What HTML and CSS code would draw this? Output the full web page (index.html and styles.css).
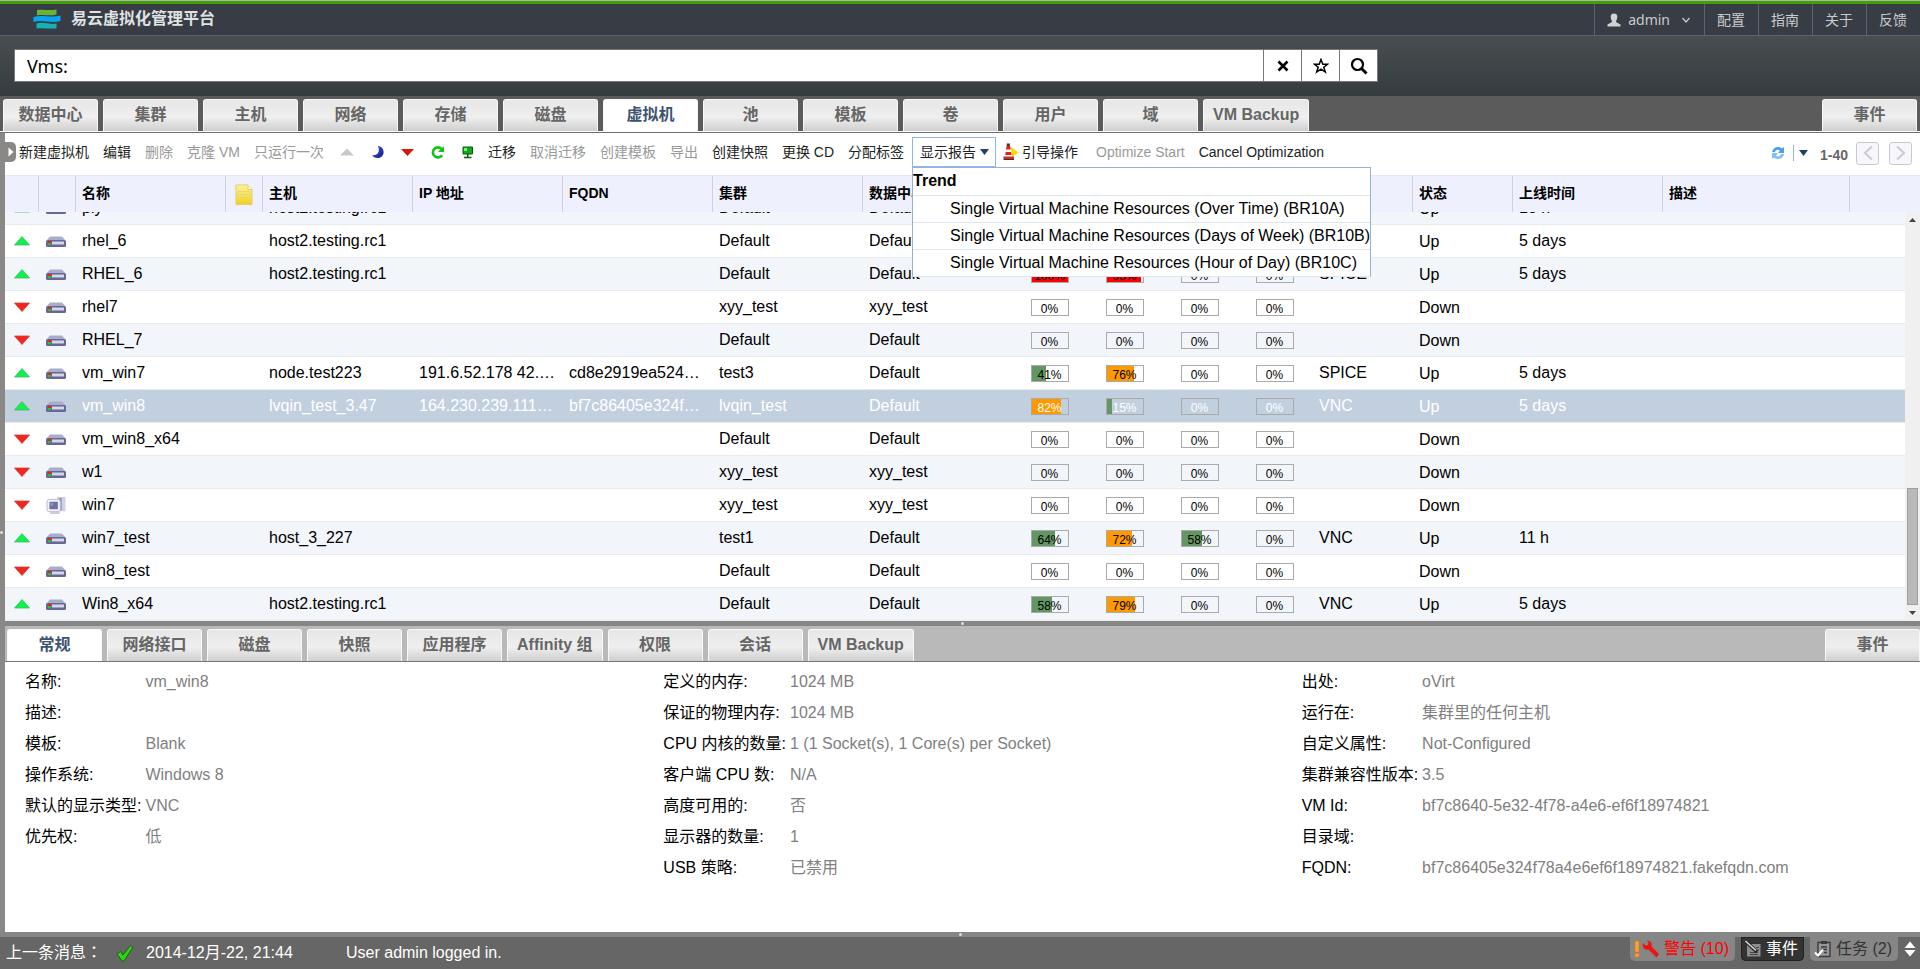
FILE: index.html
```html
<!DOCTYPE html>
<html lang="zh-CN">
<head>
<meta charset="utf-8">
<title>易云虚拟化管理平台</title>
<link rel="stylesheet" href="styles.css">
</head>
<body>
<svg class="defs" aria-hidden="true">
  <defs>
    <linearGradient id="g-note" x1="0" y1="0" x2="0" y2="1"><stop offset="0" stop-color="#fbf3a0"/><stop offset="1" stop-color="#f0d024"/></linearGradient>
    <linearGradient id="g-moon" x1="0" y1="0" x2="1" y2="1"><stop offset="0" stop-color="#4a63c4"/><stop offset="1" stop-color="#0a1896"/></linearGradient>
  </defs>
  <symbol id="up" viewBox="0 0 16 10"><path d="M8 0.5 15.5 9H0.5Z" fill="#0cf24e" stroke="#46b866" stroke-width="0.8"/></symbol>
  <symbol id="down" viewBox="0 0 16 10"><path d="M0.5 1H15.5L8 9.500Z" fill="#f8231f" stroke="#c4423e" stroke-width="0.8"/></symbol>
  <symbol id="server" viewBox="0 0 20 11">
    <path d="M4 0.500H16L19.500 4.500H0.500Z" fill="#a9adc9"/>
    <rect x="0" y="4" width="20" height="7" rx="1.500" fill="#666794"/>
    <rect x="6" y="5.500" width="12" height="3" fill="#d4d6ea"/>
    <rect x="2" y="5" width="3" height="2" fill="#e5231b"/><rect x="2" y="7" width="3" height="2" fill="#23c430"/>
  </symbol>
  <symbol id="desktop" viewBox="0 0 20 18">
    <path d="M11 0H20V15H14Z" fill="#ced0e6"/><path d="M13 1H16V14H13Z" fill="#9193b8"/>
    <rect x="0.500" y="2.500" width="14" height="13" rx="2.500" fill="#f4f4fa" stroke="#b6b8d2"/>
    <rect x="3" y="5" width="9" height="8" fill="#7072a6"/><rect x="4" y="6" width="3" height="3" fill="#9294bf"/>
    <path d="M4 17H14" stroke="#b6b8d2" stroke-width="1.500"/>
  </symbol>
</svg>

<header class="top">
  <div class="brand">
    <svg class="logo" viewBox="0 0 28 20" aria-hidden="true">
      <path d="M4 1C10 0 15 2 23.500 0.500V5.500C16 7.500 10 5 4 6.500Z" fill="#67b436"/>
      <path d="M0.500 8C9 5 17 9.500 27.500 6.500V12C18 15 9 10 0.500 13Z" fill="#0aa5ee"/>
      <path d="M3.500 14.500C10 12.500 16 16 23.500 14.500V19.500C16 20 10 18.500 3.500 19.500Z" fill="#12b3b0"/>
    </svg>
    <h1>易云虚拟化管理平台</h1>
  </div>
  <nav class="top-nav">
    <button class="user" type="button">
      <svg width="14" height="14" viewBox="0 0 14 14" aria-hidden="true"><path d="M7 0.500C9.500 0.500 10.500 2 10.300 4.500 10.100 6.500 9 7.500 9 9L13.500 11.500V13.500H0.500V11.500L5 9C5 7.500 3.900 6.500 3.700 4.500 3.500 2 4.500 0.500 7 0.500Z" fill="#d0d2d4"/></svg>
      <span>admin</span>
      <svg width="10" height="10" viewBox="0 0 10 10" aria-hidden="true"><path d="M1.500 3 5 7 8.500 3" fill="none" stroke="#c9cbcd" stroke-width="1.200"/></svg>
    </button>
    <a href="#">配置</a><a href="#">指南</a><a href="#">关于</a><a href="#">反馈</a>
  </nav>
</header>

<form class="search">
  <div class="search-box">
    <input type="text" aria-label="搜索" value="Vms:">
    <button type="button" aria-label="清除"><svg width="12" height="12" viewBox="0 0 12 12"><path d="M1.500 1.500 10.500 10.500M10.500 1.500 1.500 10.500" stroke="#000" stroke-width="2.600"/></svg></button>
    <button type="button" aria-label="书签"><svg width="16" height="16" viewBox="0 0 16 16"><path d="M8 1.500 9.800 6.200H14.600L10.800 9.200 12.300 14 8 11.100 3.700 14 5.200 9.200 1.400 6.200H6.200Z" fill="none" stroke="#000" stroke-width="1.500"/></svg></button>
    <button type="button" aria-label="搜索"><svg width="18" height="18" viewBox="0 0 18 18"><circle cx="7.500" cy="7.500" r="5.500" fill="none" stroke="#000" stroke-width="2.200"/><path d="M11.500 11.500 16.500 16.500" stroke="#000" stroke-width="3"/></svg></button>
  </div>
</form>

<nav class="tabs main-tabs">
  <button type="button" class="tab">数据中心</button>
  <button type="button" class="tab">集群</button>
  <button type="button" class="tab">主机</button>
  <button type="button" class="tab">网络</button>
  <button type="button" class="tab">存储</button>
  <button type="button" class="tab">磁盘</button>
  <button type="button" class="tab active">虚拟机</button>
  <button type="button" class="tab">池</button>
  <button type="button" class="tab">模板</button>
  <button type="button" class="tab">卷</button>
  <button type="button" class="tab">用户</button>
  <button type="button" class="tab">域</button>
  <button type="button" class="tab">VM Backup</button>
  <button type="button" class="tab last">事件</button>
</nav>

<div class="workspace">
  <div class="side-split"><i></i></div>
  <button class="side-handle" type="button" aria-label="展开"><svg width="6" height="10" viewBox="0 0 6 10"><path d="M0.500 0.500 5.500 5 0.500 9.500Z" fill="#fff"/></svg></button>
  <main class="content">
    <section class="list-pane">
      <div class="toolbar">
        <button type="button">新建虚拟机</button>
        <button type="button">编辑</button>
        <button type="button" disabled>删除</button>
        <button type="button" disabled>克隆 VM</button>
        <button type="button" disabled>只运行一次</button>
        <button type="button" disabled aria-label="运行"><svg width="16" height="16" viewBox="0 0 16 16"><path d="M9 4.500 16 11.500H2Z" fill="#c9c9c9"/></svg></button>
        <button type="button" aria-label="挂起"><svg width="16" height="16" viewBox="0 0 16 16"><path d="M10 2C18 3 17 14 9.500 14 7 14 5 13 4 11 9 12.500 12.500 8 10 2Z" fill="url(#g-moon)"/></svg></button>
        <button type="button" aria-label="关闭"><svg width="16" height="16" viewBox="0 0 16 16"><path d="M3 5H16L9.500 12Z" fill="#d8180c"/></svg></button>
        <button type="button" aria-label="重启"><svg width="16" height="16" viewBox="0 0 16 16"><path d="M14 11.200A5 5 0 1 1 13.500 5" fill="none" stroke="#10c416" stroke-width="2.600"/><path d="M16 2V8H10Z" fill="#10c416"/></svg></button>
        <button type="button" aria-label="控制台"><svg width="16" height="16" viewBox="0 0 16 16"><path d="M5 3H14.500V10H5Z" fill="#11a81a" stroke="#075d0c"/><path d="M9.700 10V13M6 13.500H13.500" stroke="#075d0c" stroke-width="1.600"/><path d="M6 4H9V7H6Z" fill="#7fec7c"/></svg></button>
        <button type="button">迁移</button>
        <button type="button" disabled>取消迁移</button>
        <button type="button" disabled>创建模板</button>
        <button type="button" disabled>导出</button>
        <button type="button">创建快照</button>
        <button type="button">更换 CD</button>
        <button type="button">分配标签</button>
        <div class="report">
          <button type="button" class="report-btn" aria-expanded="true">显示报告<svg width="9" height="6" viewBox="0 0 9 6" aria-hidden="true"><path d="M0 0H9L4.500 6Z" fill="#1f4262"/></svg></button>
          <div class="menu" role="menu">
            <h2>Trend</h2>
            <button type="button" role="menuitem">Single Virtual Machine Resources (Over Time) (BR10A)</button>
            <button type="button" role="menuitem">Single Virtual Machine Resources (Days of Week) (BR10B)</button>
            <button type="button" role="menuitem">Single Virtual Machine Resources (Hour of Day) (BR10C)</button>
          </div>
        </div>
        <button type="button" class="guide"><svg width="16" height="18" viewBox="0 0 16 18" aria-hidden="true"><path d="M8 4 15.500 9.500 8 15Z" fill="#ffd400"/><path d="M3.500 1.500H7L9.500 14H1.500Z" fill="#fff"/><path d="M3.500 3H7.200L7.700 6.500H3ZM2.700 9H8.100L8.600 12H2.200Z" fill="#e02418"/><path d="M3.800 0.500H6.800V3H3.800Z" fill="#333"/><path d="M0.500 13.500H11V16H0.500Z" fill="#d8281c"/><path d="M0.500 16.500H11" stroke="#333"/></svg>引导操作</button>
        <button type="button" disabled>Optimize Start</button>
        <button type="button">Cancel Optimization</button>
        <div class="pager">
          <button type="button" class="refresh" aria-label="刷新"><svg width="16" height="16" viewBox="0 0 16 16"><path d="M2 7C3 2 9 0.500 12 3.500L14 2V8H8L10 5.500C8 4 5.500 4.500 5 7Z" fill="#4a9ef0"/><path d="M14 9C13 14 7 15.500 4 12.500L2 14V8H8L6 10.500C8 12 10.500 11.500 11 9Z" fill="#7fc0f8"/></svg></button>
          <button type="button" class="refresh-rate" aria-label="刷新间隔"><svg width="9" height="6" viewBox="0 0 9 6"><path d="M0 0H9L4.500 6Z" fill="#1f4262"/></svg></button>
          <span class="range">1-40</span>
          <button type="button" class="page" aria-label="上一页"><svg width="12" height="16" viewBox="0 0 12 16"><path d="M10 1.500 3 8 10 14.500" fill="none" stroke="#ccccd2" stroke-width="2.200"/></svg></button>
          <button type="button" class="page" aria-label="下一页"><svg width="12" height="16" viewBox="0 0 12 16"><path d="M2 1.500 9 8 2 14.500" fill="none" stroke="#ccccd2" stroke-width="2.200"/></svg></button>
        </div>
      </div>

      <table class="grid grid-head">
        <colgroup><col class="w34"><col class="w37"><col class="w150"><col class="w37"><col class="w150"><col class="w150"><col class="w150"><col class="w150"><col class="w150"><col class="w75"><col class="w75"><col class="w75"><col class="w75"><col class="w100"><col class="w100"><col class="w150"><col class="w187"><col></colgroup>
        <thead><tr>
          <th></th><th></th><th>名称</th>
          <th class="note"><svg width="18" height="22" viewBox="0 0 18 22" aria-label="注释"><path d="M1 1H13L17 5.500V20.500H1Z" fill="url(#g-note)" stroke="#e3cf62"/><path d="M13 1V5.500H17" fill="#fffbd0" stroke="#e3cf62"/><path d="M3 7.500H15M3 10.500H15M3 13.500H15" stroke="#e9d766"/></svg></th>
          <th>主机</th><th>IP 地址</th><th>FQDN</th><th>集群</th><th>数据中心</th><th></th><th></th><th></th><th></th><th></th><th>状态</th><th>上线时间</th><th>描述</th><th class="end"></th>
        </tr></thead>
      </table>
      <div class="grid-scroll">
        <div class="grid-view">
        <table class="grid grid-body">
          <colgroup><col class="w33"><col class="w37"><col class="w150"><col class="w37"><col class="w150"><col class="w150"><col class="w150"><col class="w150"><col class="w150"><col class="w75"><col class="w75"><col class="w75"><col class="w75"><col class="w100"><col class="w100"><col class="w150"><col></colgroup>
          <tbody>
          <tr><td class="st"><svg><use href="#up"/></svg></td><td class="ty"><svg><use href="#server"/></svg></td><td>ply</td><td></td><td>host2.testing.rc1</td><td></td><td></td><td>Default</td><td>Default</td><td class="m"></td><td class="m"></td><td class="m"></td><td class="m"></td><td>SPICE</td><td class="state">Up</td><td>10 h</td><td></td></tr>
          <tr><td class="st"><svg><use href="#up"/></svg></td><td class="ty"><svg><use href="#server"/></svg></td><td>rhel_6</td><td></td><td>host2.testing.rc1</td><td></td><td></td><td>Default</td><td>Default</td><td class="m"></td><td class="m"></td><td class="m"></td><td class="m"></td><td>SPICE</td><td class="state">Up</td><td>5 days</td><td></td></tr>
          <tr><td class="st"><svg><use href="#up"/></svg></td><td class="ty"><svg><use href="#server"/></svg></td><td>RHEL_6</td><td></td><td>host2.testing.rc1</td><td></td><td></td><td>Default</td><td>Default</td><td class="m"><div class="meter"><i class="high" style="width:100%"></i><b>100%</b></div></td><td class="m"><div class="meter"><i class="high" style="width:95%"></i><b>95%</b></div></td><td class="m"><div class="meter"><b>0%</b></div></td><td class="m"><div class="meter"><b>0%</b></div></td><td>SPICE</td><td class="state">Up</td><td>5 days</td><td></td></tr>
          <tr><td class="st"><svg><use href="#down"/></svg></td><td class="ty"><svg><use href="#server"/></svg></td><td>rhel7</td><td></td><td></td><td></td><td></td><td>xyy_test</td><td>xyy_test</td><td class="m"><div class="meter"><b>0%</b></div></td><td class="m"><div class="meter"><b>0%</b></div></td><td class="m"><div class="meter"><b>0%</b></div></td><td class="m"><div class="meter"><b>0%</b></div></td><td></td><td class="state">Down</td><td></td><td></td></tr>
          <tr><td class="st"><svg><use href="#down"/></svg></td><td class="ty"><svg><use href="#server"/></svg></td><td>RHEL_7</td><td></td><td></td><td></td><td></td><td>Default</td><td>Default</td><td class="m"><div class="meter"><b>0%</b></div></td><td class="m"><div class="meter"><b>0%</b></div></td><td class="m"><div class="meter"><b>0%</b></div></td><td class="m"><div class="meter"><b>0%</b></div></td><td></td><td class="state">Down</td><td></td><td></td></tr>
          <tr><td class="st"><svg><use href="#up"/></svg></td><td class="ty"><svg><use href="#server"/></svg></td><td>vm_win7</td><td></td><td>node.test223</td><td>191.6.52.178 42.…</td><td>cd8e2919ea524…</td><td>test3</td><td>Default</td><td class="m"><div class="meter"><i class="low" style="width:41%"></i><b>41%</b></div></td><td class="m"><div class="meter"><i class="mid" style="width:76%"></i><b>76%</b></div></td><td class="m"><div class="meter"><b>0%</b></div></td><td class="m"><div class="meter"><b>0%</b></div></td><td>SPICE</td><td class="state">Up</td><td>5 days</td><td></td></tr>
          <tr class="selected"><td class="st"><svg><use href="#up"/></svg></td><td class="ty"><svg><use href="#server"/></svg></td><td>vm_win8</td><td></td><td>lvqin_test_3.47</td><td>164.230.239.111…</td><td>bf7c86405e324f…</td><td>lvqin_test</td><td>Default</td><td class="m"><div class="meter"><i class="mid" style="width:82%"></i><b>82%</b></div></td><td class="m"><div class="meter"><i class="low" style="width:15%"></i><b>15%</b></div></td><td class="m"><div class="meter"><b>0%</b></div></td><td class="m"><div class="meter"><b>0%</b></div></td><td>VNC</td><td class="state">Up</td><td>5 days</td><td></td></tr>
          <tr><td class="st"><svg><use href="#down"/></svg></td><td class="ty"><svg><use href="#server"/></svg></td><td>vm_win8_x64</td><td></td><td></td><td></td><td></td><td>Default</td><td>Default</td><td class="m"><div class="meter"><b>0%</b></div></td><td class="m"><div class="meter"><b>0%</b></div></td><td class="m"><div class="meter"><b>0%</b></div></td><td class="m"><div class="meter"><b>0%</b></div></td><td></td><td class="state">Down</td><td></td><td></td></tr>
          <tr><td class="st"><svg><use href="#down"/></svg></td><td class="ty"><svg><use href="#server"/></svg></td><td>w1</td><td></td><td></td><td></td><td></td><td>xyy_test</td><td>xyy_test</td><td class="m"><div class="meter"><b>0%</b></div></td><td class="m"><div class="meter"><b>0%</b></div></td><td class="m"><div class="meter"><b>0%</b></div></td><td class="m"><div class="meter"><b>0%</b></div></td><td></td><td class="state">Down</td><td></td><td></td></tr>
          <tr><td class="st"><svg><use href="#down"/></svg></td><td class="ty pc"><svg><use href="#desktop"/></svg></td><td>win7</td><td></td><td></td><td></td><td></td><td>xyy_test</td><td>xyy_test</td><td class="m"><div class="meter"><b>0%</b></div></td><td class="m"><div class="meter"><b>0%</b></div></td><td class="m"><div class="meter"><b>0%</b></div></td><td class="m"><div class="meter"><b>0%</b></div></td><td></td><td class="state">Down</td><td></td><td></td></tr>
          <tr><td class="st"><svg><use href="#up"/></svg></td><td class="ty"><svg><use href="#server"/></svg></td><td>win7_test</td><td></td><td>host_3_227</td><td></td><td></td><td>test1</td><td>Default</td><td class="m"><div class="meter"><i class="low" style="width:64%"></i><b>64%</b></div></td><td class="m"><div class="meter"><i class="mid" style="width:72%"></i><b>72%</b></div></td><td class="m"><div class="meter"><i class="low" style="width:58%"></i><b>58%</b></div></td><td class="m"><div class="meter"><b>0%</b></div></td><td>VNC</td><td class="state">Up</td><td>11 h</td><td></td></tr>
          <tr><td class="st"><svg><use href="#down"/></svg></td><td class="ty"><svg><use href="#server"/></svg></td><td>win8_test</td><td></td><td></td><td></td><td></td><td>Default</td><td>Default</td><td class="m"><div class="meter"><b>0%</b></div></td><td class="m"><div class="meter"><b>0%</b></div></td><td class="m"><div class="meter"><b>0%</b></div></td><td class="m"><div class="meter"><b>0%</b></div></td><td></td><td class="state">Down</td><td></td><td></td></tr>
          <tr><td class="st"><svg><use href="#up"/></svg></td><td class="ty"><svg><use href="#server"/></svg></td><td>Win8_x64</td><td></td><td>host2.testing.rc1</td><td></td><td></td><td>Default</td><td>Default</td><td class="m"><div class="meter"><i class="low" style="width:58%"></i><b>58%</b></div></td><td class="m"><div class="meter"><i class="mid" style="width:79%"></i><b>79%</b></div></td><td class="m"><div class="meter"><b>0%</b></div></td><td class="m"><div class="meter"><b>0%</b></div></td><td>VNC</td><td class="state">Up</td><td>5 days</td><td></td></tr>
          </tbody>
        </table>
        </div>
        <div class="scrollbar" aria-hidden="true">
          <svg width="15" height="16" viewBox="0 0 15 16"><path d="M4 10H11L7.500 6Z" fill="#444"/></svg>
          <div class="track"><div class="thumb"></div></div>
          <svg width="15" height="16" viewBox="0 0 15 16"><path d="M4 6H11L7.500 10Z" fill="#444"/></svg>
        </div>
      </div>
    </section>

    <div class="split"><i></i></div>

    <section class="detail-pane">
      <nav class="tabs sub-tabs">
        <button type="button" class="tab active">常规</button>
        <button type="button" class="tab">网络接口</button>
        <button type="button" class="tab">磁盘</button>
        <button type="button" class="tab">快照</button>
        <button type="button" class="tab">应用程序</button>
        <button type="button" class="tab">Affinity 组</button>
        <button type="button" class="tab">权限</button>
        <button type="button" class="tab">会话</button>
        <button type="button" class="tab">VM Backup</button>
        <button type="button" class="tab last">事件</button>
      </nav>
      <div class="details">
        <dl>
          <dt>名称:</dt><dd>vm_win8</dd>
          <dt>描述:</dt><dd></dd>
          <dt>模板:</dt><dd>Blank</dd>
          <dt>操作系统:</dt><dd>Windows 8</dd>
          <dt>默认的显示类型:</dt><dd>VNC</dd>
          <dt>优先权:</dt><dd>低</dd>
        </dl>
        <dl>
          <dt>定义的内存:</dt><dd>1024 MB</dd>
          <dt>保证的物理内存:</dt><dd>1024 MB</dd>
          <dt>CPU 内核的数量:</dt><dd>1 (1 Socket(s), 1 Core(s) per Socket)</dd>
          <dt>客户端 CPU 数:</dt><dd>N/A</dd>
          <dt>高度可用的:</dt><dd>否</dd>
          <dt>显示器的数量:</dt><dd>1</dd>
          <dt>USB 策略:</dt><dd>已禁用</dd>
        </dl>
        <dl>
          <dt>出处:</dt><dd>oVirt</dd>
          <dt>运行在:</dt><dd>集群里的任何主机</dd>
          <dt>自定义属性:</dt><dd>Not-Configured</dd>
          <dt>集群兼容性版本:</dt><dd>3.5</dd>
          <dt>VM Id:</dt><dd>bf7c8640-5e32-4f78-a4e6-ef6f18974821</dd>
          <dt>目录域:</dt><dd></dd>
          <dt>FQDN:</dt><dd>bf7c86405e324f78a4e6ef6f18974821.fakefqdn.com</dd>
        </dl>
      </div>
    </section>
  </main>
</div>

<div class="split"><i></i></div>
<footer class="status">
  <span class="status-label">上一条消息<span lang="zh-TW">：</span></span>
  <svg class="check" width="18" height="18" viewBox="0 0 18 18" aria-hidden="true"><path d="M1 10 4.500 7.500 7 11 14.500 1.500 17 3 8 17H6Z" fill="#35d01c" stroke="#0d6a08"/></svg>
  <span class="time">2014-12月-22, 21:44</span>
  <span>User admin logged in.</span>
  <div class="status-btns">
    <button type="button" class="alert"><svg width="26" height="18" viewBox="0 0 26 18" aria-hidden="true"><path d="M1 1H5V12H1ZM1 13.500H5V17H1Z" fill="#f7a13a" stroke="#d97a14" stroke-width="0.600"/><path d="M9 3 11.500 5.500 14 5 14.500 2.500 12.500 0.800C16 0 18.500 2.500 17.500 6.500L25 14 22.500 17.500 14.500 9.500C11 10.500 7.500 7 9 3Z" fill="#ee1310"/></svg>警告 (10)</button>
    <button type="button" class="events"><svg width="17" height="18" viewBox="0 0 17 18" aria-hidden="true"><path d="M2 4H15.500V16.500H2Z" fill="#8d8d8d"/><path d="M5 12.500H13M5 14.500H13M11 7.500H14M12 10H14" stroke="#444"/><path d="M1 1.500 12 12" stroke="#222" stroke-width="3.500"/><path d="M0.500 1 11 10.500" stroke="#d5d5d5" stroke-width="1.600"/></svg>事件</button>
    <button type="button" class="tasks"><svg width="18" height="18" viewBox="0 0 18 18" aria-hidden="true"><path d="M4 2.500H16V16.500H4Z" fill="#979797" stroke="#3c3c3c" stroke-width="1.400"/><path d="M7 1H13V4H7Z" fill="#3c3c3c"/><path d="M7 7H13M7 9.500H13M10 12.500H13" stroke="#3c3c3c" stroke-width="1.300"/><path d="M1 12.500 4 15.500 9 9.500" fill="none" stroke="#fff" stroke-width="2"/></svg>任务 (2)</button>
    <button type="button" class="expand" aria-label="展开"><svg width="12" height="16" viewBox="0 0 12 16"><path d="M0.500 7 6 0.500 11.500 7ZM0.500 9H11.500L6 15.500Z" fill="#fff"/></svg></button>
  </div>
</footer>
</body>
</html>
```

FILE: styles.css
```css
* { box-sizing: border-box; }

body {
  margin: 0;
  height: 100vh;
  display: flex;
  flex-direction: column;
  overflow: hidden;
  background: #fff;
  color: #000;
  font: 16px/20px "Liberation Sans", "Noto Sans CJK SC", sans-serif;
}

button, input {
  margin: 0;
  padding: 0;
  border: 0;
  background: none;
  color: inherit;
  font: inherit;
}

svg { flex: none; }
.defs { position: absolute; width: 0; height: 0; }

/* header */
.top {
  display: flex;
  justify-content: space-between;
  flex: none;
  height: 36px;
  padding-top: 3px;
  border-top: 1px solid #b0b0b0;
  box-shadow: inset 0 3px #41a004, inset 0 -1px #5b616a;
  background: #383c45;
}
.brand { display: flex; align-items: center; gap: 10px; padding: 0 0 2px 33px; }
.logo { width: 28px; height: 20px; }
.brand h1 { margin: 0; font-size: 16px; font-weight: 700; color: #dfe1e3; }
.top-nav { display: flex; color: #c9cbcd; font-size: 14px; border-bottom: 1px solid #5b6571; }
.top-nav > * {
  display: flex;
  align-items: center;
  padding: 0 13px 0 12px;
  border-left: 1px solid #5b6571;
  color: inherit;
  text-decoration: none;
}
.user { font-family: "Noto Sans", sans-serif; gap: 7px; }
.user span { margin-right: 4px; }

/* search */
.search {
  flex: none;
  padding: 13px 14px 14px;
  background: linear-gradient(#484d50, #353c3f);
}
.search-box { display: flex; width: calc(100% - 528px); height: 33px; border: 1px solid #777; background: #fff; }
.search-box input {
  flex: 1;
  min-width: 0;
  padding: 0 12px;
  outline: 0;
  font: 18px "Noto Sans", sans-serif;
}
.search-box button {
  display: flex;
  align-items: center;
  justify-content: center;
  width: 38px;
  border-left: 1px solid #777;
}

/* tabs */
.tabs { display: flex; flex: none; gap: 5px; height: 37px; }
.main-tabs {
  padding: 3px 3px 0;
  background: #5b5b5b;
  border-bottom: 1px solid #707070;
  box-shadow: inset 0 -1px #fff;
}
.tab {
  min-width: 95px;
  height: 32px;
  padding: 0 9px 2px;
  border: 1px solid #f8f8f8;
  border-bottom: 0;
  border-radius: 3px 3px 0 0;
  background: linear-gradient(#e6e6e6, #efefef 55%, #cfcfcf);
  color: #666;
  font-weight: 700;
  white-space: nowrap;
}
.tab.active { background: #fff; color: #3d5370; }
.tab.last { margin-left: auto; }
.sub-tabs { height: 36px; padding: 3px 0 0 2px; background: #b9b9b9; border-bottom: 1px solid #757575; }

/* workspace */
.workspace { position: relative; display: flex; flex: 1; min-height: 0; }
.side-split { display: flex; align-items: center; width: 5px; background: #8a8886; }
.side-split i, .split i { width: 3px; height: 3px; border-radius: 2px; background: #ddd; }
.side-handle {
  position: absolute;
  left: 5px;
  top: 9px;
  width: 11px;
  height: 20px;
  border-radius: 0 5px 5px 0;
  background: #8a8886;
  line-height: 0;
}
.content { display: flex; flex-direction: column; flex: 1; min-width: 0; }
.split { display: flex; align-items: center; justify-content: center; flex: none; height: 5px; background: #868686; }
.list-pane { display: flex; flex-direction: column; flex: 488 1 0; min-height: 0; }
.detail-pane { display: flex; flex-direction: column; flex: 306 1 0; min-height: 0; }

/* toolbar */
.toolbar {
  display: flex;
  align-items: center;
  flex: none;
  height: 42px;
  padding: 0 8px 4px 7px;
  font-size: 14px;
  color: #222;
}
.toolbar > button {
  display: flex;
  align-items: center;
  height: 30px;
  padding: 0 7px;
  white-space: nowrap;
}
.toolbar > button:disabled { color: #999; }
.toolbar > .guide { gap: 3px; margin-right: 4px; }
.report { position: relative; margin-left: 1px; }
.report-btn {
  display: flex;
  align-items: center;
  gap: 4px;
  height: 30px;
  padding: 0 6px 0 7px;
  border: 1px solid #8fb6ee;
  white-space: nowrap;
}
.menu {
  position: absolute;
  z-index: 2;
  left: 0;
  top: 30px;
  border: 1px solid #94b4cc;
  border-bottom-color: #dce6f0;
  background: #fff;
  color: #000;
  font-size: 16px;
}
.menu h2, .menu button { height: 27px; line-height: 26px; font-size: 16px; white-space: nowrap; }
.menu h2 { margin: 0; font-weight: 700; }
.menu button { display: block; width: 100%; padding-left: 37px; border-top: 1px solid #dce6f0; text-align: left; }
.pager { display: flex; align-items: center; margin-left: auto; padding-top: 2px; }
.pager button { line-height: 0; }
.refresh { padding-right: 7px; border-right: 1px solid #8fb6ee; }
.refresh-rate { padding: 0 12px 0 5px; }
.range { font-weight: 700; font-size: 14px; color: #666; padding-top: 3px; }
.page {
  width: 23px;
  height: 23px;
  margin-left: 10px;
  border: 1px solid #c8c8d0;
  border-radius: 3px;
  background: #f6f6fc;
}
.range + .page { margin-left: 8px; }

/* grid */
.grid { width: 100%; table-layout: fixed; border-collapse: separate; border-spacing: 0; }
.w33 { width: 33px; }
.w34 { width: 34px; }
.w37 { width: 37px; }
.w75 { width: 75px; }
.w100 { width: 100px; }
.w150 { width: 150px; }
.w187 { width: 187px; }
.grid-head { flex: none; background: #eef0fe; border-top: 1px solid #dfe8f3; }
.grid th {
  height: 36px;
  padding: 0 6px 2px;
  border-right: 1px solid #cdd0e0;
  text-align: left;
  font-size: 14px;
}
.grid th.end { border-right: 0; }
.grid th.note { padding: 2px 0 0; text-align: center; line-height: 0; }
.grid-scroll { display: flex; flex: 1; min-height: 0; }
.grid-view { display: flex; flex: 1; min-width: 0; flex-direction: column; justify-content: flex-end; overflow: hidden; }
.grid-body { flex: none; }
.grid-body tr:nth-child(odd) { background: #f2f5fa; }
.grid-body tr.selected { background: #c2cfdf; color: #fff; }
.grid-body td {
  height: 33px;
  padding: 0 6px 0 7px;
  border-bottom: 1px solid #e8ebee;
  overflow: hidden;
  white-space: nowrap;
}
.grid-body td.state { padding-top: 2px; }
.grid-body td.st { padding: 0 0 0 9px; line-height: 0; }
.grid-body td.ty { padding: 0 0 0 8px; line-height: 0; }
.st svg { width: 16px; height: 10px; }
.ty svg { width: 20px; height: 11px; }
.ty.pc svg { height: 17px; }
.grid-body td.m { padding: 0; }
.meter { position: relative; width: 38px; height: 17px; margin: 0 auto; border: 1px solid #aaa; }
.meter i { display: block; height: 15px; }
.meter b { position: absolute; inset: 0; font-size: 12px; font-weight: 400; line-height: 18px; text-align: center; }
.low { background: #629662; }
.mid { background: #ff9900; }
.high { background: #ff0000; }

.scrollbar { display: flex; flex-direction: column; width: 15px; background: #f0f0f0; }
.track { display: flex; flex: 1; align-items: flex-end; padding: 0 2px; }
.thumb { width: 100%; height: 31%; border: 1px solid #a0a0a0; background: #b9b9b9; }

/* details */
.details { display: grid; grid-template-columns: repeat(3, 1fr); padding-top: 4px; }
.details dl {
  display: grid;
  grid-template-columns: max-content 1fr;
  grid-auto-rows: 31px;
  align-content: start;
  column-gap: 4px;
  margin: 0;
  padding-left: 20px;
  line-height: 31px;
  white-space: nowrap;
}
.details dd { margin: 0; color: #808080; }

/* status bar */
.status {
  display: flex;
  flex: none;
  height: 32px;
  padding-left: 6px;
  background: #666;
  color: #fff;
  line-height: 32px;
}
.status-label { width: 110px; line-height: 28px; }
.status-label span { font-family: "Noto Sans CJK TC", sans-serif; }
.check { align-self: center; margin-right: 12px; }
.time { width: 200px; }
.status-btns { display: flex; align-items: flex-start; gap: 6px; margin-left: auto; padding-right: 4px; }
.status-btns button {
  display: flex;
  align-items: center;
  gap: 4px;
  height: 24px;
  padding: 0 6px 0 4px;
  border-radius: 0 0 5px 5px;
  background: #868686;
  white-space: nowrap;
}
.status-btns .alert { color: #f00; }
.status-btns .events { background: #333; box-shadow: inset 0 0 0 1px #222; }
.status-btns .tasks { color: #333; }
.status-btns .expand { padding: 0; background: none; }
```
